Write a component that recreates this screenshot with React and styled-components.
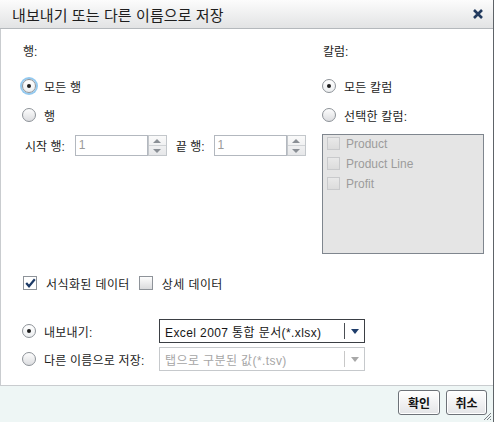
import styled, { createGlobalStyle, css } from "styled-components";

const GlobalStyle = createGlobalStyle`
  html, body {
    margin: 0;
    padding: 0;
    background: #ffffff;
  }
  body {
    font-family: "Liberation Sans", "Noto Sans CJK KR", sans-serif;
    font-size: 12px;
    color: #1c1c1c;
  }
`;

const Dialog = styled.div`
  width: 493px;
  height: 422px;
  display: flex;
  flex-direction: column;
  border-right: 1px solid #5e6368;
  background: #ffffff;
  position: relative;
`;

const TitleBar = styled.div`
  height: 28px;
  flex: none;
  display: flex;
  align-items: center;
  justify-content: space-between;
  padding: 0 9px 0 12px;
  background: linear-gradient(#fcfcfc, #e2e3e4);
  border-bottom: 1px solid #b4b8bc;
`;

const Title = styled.h1`
  margin: 0;
  font-size: 15px;
  font-weight: 400;
  color: #1e1e1e;
  letter-spacing: 0.1px;
`;

const CloseButton = styled.button`
  border: none;
  background: none;
  padding: 0;
  width: 12px;
  height: 12px;
  display: flex;
  cursor: pointer;
`;

const Body = styled.div`
  flex: 1;
  display: flex;
  flex-direction: column;
  padding: 16px 0 0 21px;
  border-left: 1px solid #c9cccf;
  border-bottom: 1px solid #c9cccf;
`;

const Columns = styled.div`
  display: flex;
`;

const Column = styled.div`
  display: flex;
  flex-direction: column;
  width: ${(p) => p.$width || "auto"};
`;

const SectionLabel = styled.div`
  height: 14px;
  line-height: 14px;
  margin: 0 0 17px 1px;
`;

const OptionRow = styled.label`
  display: flex;
  align-items: center;
  gap: 8px;
  height: 20px;
  letter-spacing: 0.2px;
  margin-bottom: ${(p) => p.$gap || 0}px;
`;

const Radio = styled.span`
  width: 12px;
  height: 12px;
  flex: none;
  border-radius: 50%;
  border: 1px solid #8d9298;
  background: linear-gradient(#fdfdfd, #dcdde0);
  display: flex;
  align-items: center;
  justify-content: center;
  ${(p) =>
    p.$checked &&
    css`
      background: linear-gradient(#ffffff, #eceef0);
      &::after {
        content: "";
        width: 4px;
        height: 4px;
        border-radius: 50%;
        background: #1d1d1d;
      }
    `}
  ${(p) =>
    p.$focused &&
    css`
      box-shadow: 0 0 0 2px #93c9ef;
    `}
`;

const RangeRow = styled.div`
  display: flex;
  align-items: center;
  height: 21px;
  margin-top: 10px;
  padding-left: 3px;
`;

const FieldLabel = styled.span`
  margin-right: ${(p) => p.$gap}px;
  white-space: nowrap;
`;

const NumberInput = styled.div`
  width: 68px;
  height: 19px;
  border: 1px solid #b3b8bf;
  padding-left: 3px;
  line-height: 19px;
  color: #9a9a9a;
  background: #ffffff;
`;

const Spinner = styled.div`
  width: 17px;
  height: 19px;
  border: 1px solid #c3c7cb;
  margin-right: ${(p) => p.$gap || 0}px;
  display: flex;
  flex-direction: column;
  background: linear-gradient(#fafafa, #e6e7e9);
`;

const SpinHalf = styled.div`
  flex: 1;
  display: flex;
  align-items: center;
  justify-content: center;
  & + & {
    border-top: 1px solid #d0d3d6;
  }
  &::after {
    content: "";
    border-left: 4px solid transparent;
    border-right: 4px solid transparent;
    ${(p) =>
      p.$down
        ? "border-top: 4px solid #8a8f95;"
        : "border-bottom: 4px solid #8a8f95;"}
  }
`;

const ColumnList = styled.div`
  margin-top: 9px;
  width: 160px;
  height: 118px;
  border: 1px solid #7f868e;
  background: #e5e5e5;
  display: flex;
  flex-direction: column;
`;

const ListItem = styled.div`
  display: flex;
  align-items: center;
  gap: 6px;
  height: 20px;
  padding: 0 0 3px 4px;
  box-sizing: border-box;
  color: #9c9c9c;
`;

const CheckBox = styled.span`
  width: ${(p) => (p.$small ? 11 : 12)}px;
  height: ${(p) => (p.$small ? 11 : 12)}px;
  flex: none;
  border: 1px solid ${(p) => (p.$disabled ? "#c9cacc" : "#8e9399")};
  background: ${(p) =>
    p.$checked
      ? "#ffffff"
      : p.$disabled
      ? "linear-gradient(#e9e9e9, #dcdcdc)"
      : "linear-gradient(#fdfdfd, #dadbdd)"};
  display: flex;
  align-items: center;
  justify-content: center;
`;

const CheckRow = styled.div`
  display: flex;
  align-items: center;
  height: 16px;
  margin-top: 21px;
  padding-left: 1px;
`;

const CheckLabel = styled.label`
  display: flex;
  align-items: center;
  gap: 9px;
  margin-right: 9px;
  letter-spacing: 0.4px;
`;

const ExportGrid = styled.div`
  margin-top: 28px;
  display: grid;
  grid-template-columns: 137px 206px;
  grid-auto-rows: 24px;
  row-gap: 4px;
  align-items: center;
`;

const Select = styled.div`
  height: 22px;
  border: 1px solid ${(p) => (p.$disabled ? "#c6c9cc" : "#3b3f44")};
  display: flex;
  align-items: center;
  padding-left: 5px;
  color: ${(p) => (p.$disabled ? "#a6a6a6" : "#161616")};
  background: #ffffff;
`;

const SelectText = styled.span`
  flex: 1;
  white-space: nowrap;
  letter-spacing: 0.4px;
`;

const SelectDivider = styled.span`
  width: 1px;
  height: 16px;
  background: ${(p) => (p.$disabled ? "#c8c8c8" : "#4a4e53")};
`;

const Arrow = styled.span`
  width: 19px;
  display: flex;
  justify-content: center;
  &::after {
    content: "";
    border-left: 4px solid transparent;
    border-right: 4px solid transparent;
    border-top: 5px solid ${(p) => (p.$disabled ? "#a8a8a8" : "#1f3d6b")};
  }
`;

const Footer = styled.div`
  height: 36px;
  flex: none;
  background: #eef6f5;
  display: flex;
  justify-content: flex-end;
  align-items: flex-start;
  gap: 6px;
  padding: 4px 6px 0 0;
  box-sizing: border-box;
`;

const Button = styled.button`
  height: 25px;
  width: ${(p) => p.$width}px;
  padding: 0;
  border: 1px solid #6d7278;
  border-radius: 3px;
  background: linear-gradient(#ffffff, #e4e5e7);
  font-family: "Liberation Sans", "Noto Sans CJK KR", sans-serif;
  font-size: 12px;
  font-weight: 700;
  color: #111;
  box-shadow: inset 0 0 0 1px #ffffff;
`;

const Grip = styled.svg`
  position: absolute;
  right: 1px;
  bottom: 1px;
`;

function CheckMark() {
  return (
    <svg width="11" height="10" viewBox="0 0 11 10">
      <path
        d="M1.2 5 L4 8.2 L9.8 1.2"
        fill="none"
        stroke="#1d3a66"
        strokeWidth="2.2"
      />
    </svg>
  );
}

const columns = ["Product", "Product Line", "Profit"];

export default function App() {
  return (
    <>
      <GlobalStyle />
      <Dialog>
        <TitleBar>
          <Title>내보내기 또는 다른 이름으로 저장</Title>
          <CloseButton aria-label="닫기">
            <svg width="12" height="12" viewBox="0 0 12 12">
              <path
                d="M2 2 L10 10 M10 2 L2 10"
                stroke="#223a5e"
                strokeWidth="2.6"
              />
            </svg>
          </CloseButton>
        </TitleBar>
        <Body>
          <Columns>
            <Column $width="300px">
              <SectionLabel>행:</SectionLabel>
              <OptionRow $gap={9}>
                <Radio $checked $focused />
                모든 행
              </OptionRow>
              <OptionRow>
                <Radio />행
              </OptionRow>
              <RangeRow>
                <FieldLabel $gap={10}>시작 행:</FieldLabel>
                <NumberInput>1</NumberInput>
                <Spinner $gap={9}>
                  <SpinHalf />
                  <SpinHalf $down />
                </Spinner>
                <FieldLabel $gap={9}>끝 행:</FieldLabel>
                <NumberInput>1</NumberInput>
                <Spinner>
                  <SpinHalf />
                  <SpinHalf $down />
                </Spinner>
              </RangeRow>
            </Column>
            <Column>
              <SectionLabel>칼럼:</SectionLabel>
              <OptionRow $gap={9}>
                <Radio $checked />
                모든 칼럼
              </OptionRow>
              <OptionRow>
                <Radio />
                선택한 칼럼:
              </OptionRow>
              <ColumnList>
                {columns.map((c) => (
                  <ListItem key={c}>
                    <CheckBox $disabled $small />
                    {c}
                  </ListItem>
                ))}
              </ColumnList>
            </Column>
          </Columns>
          <CheckRow>
            <CheckLabel>
              <CheckBox $checked>
                <CheckMark />
              </CheckBox>
              서식화된 데이터
            </CheckLabel>
            <CheckLabel>
              <CheckBox />
              상세 데이터
            </CheckLabel>
          </CheckRow>
          <ExportGrid>
            <OptionRow>
              <Radio $checked />
              내보내기:
            </OptionRow>
            <Select>
              <SelectText>Excel 2007 통합 문서(*.xlsx)</SelectText>
              <SelectDivider />
              <Arrow />
            </Select>
            <OptionRow>
              <Radio />
              다른 이름으로 저장:
            </OptionRow>
            <Select $disabled>
              <SelectText>탭으로 구분된 값(*.tsv)</SelectText>
              <SelectDivider $disabled />
              <Arrow $disabled />
            </Select>
          </ExportGrid>
        </Body>
        <Footer>
          <Button $width={42}>확인</Button>
          <Button $width={41}>취소</Button>
        </Footer>
        <Grip width="9" height="9" viewBox="0 0 9 9">
          <path d="M8 1 L1 8 M8 4 L4 8 M8 7 L7 8" stroke="#7a7f85" strokeWidth="1" />
        </Grip>
      </Dialog>
    </>
  );
}
